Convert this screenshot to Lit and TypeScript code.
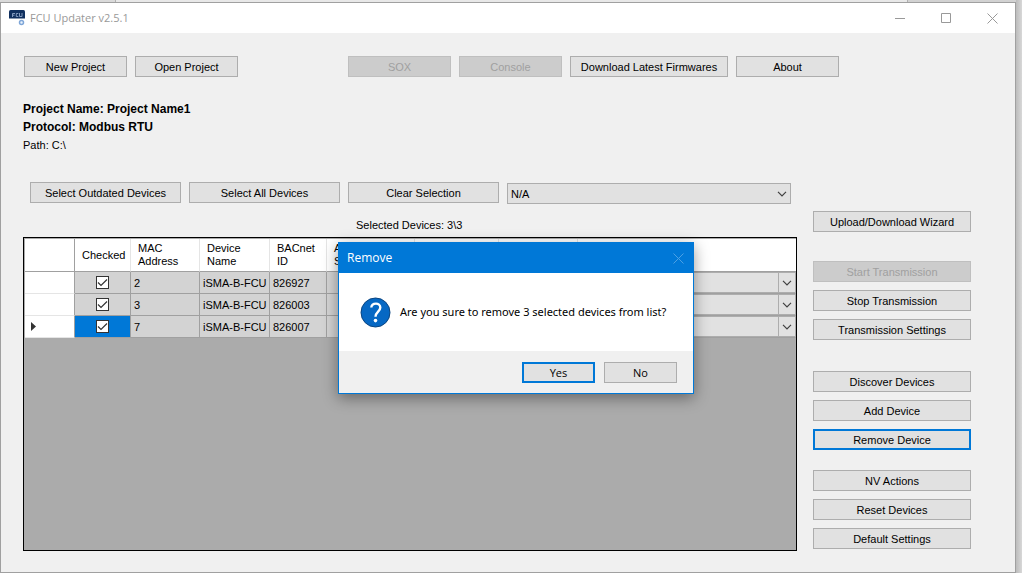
import { LitElement, html, css, svg } from "lit";
import { customElement } from "lit/decorators.js";

const chevron = html`<svg class="chev" width="10" height="6" viewBox="0 0 10 6" aria-hidden="true"><path d="M1 0.8 L5 4.8 L9 0.8" fill="none" stroke="#404040" stroke-width="1.2"/></svg>`;

@customElement("fcu-combo")
class FcuCombo extends LitElement {
  static properties = { value: {}, label: {}, cell: { type: Boolean, reflect: true } };
  declare value: string;
  declare label: string;
  declare cell: boolean;
  static styles = css`
    :host { display: grid; position: relative; }
    .box { appearance: none; box-sizing: border-box; width: 100%; height: 21px; margin: 0; padding: 0 24px 0 3px; border: 1px solid #adadad; border-radius: 0; background: #e1e1e1; color: #000; font: 11px/14px "Liberation Sans", Arial, sans-serif; }
    .drop { position: absolute; right: 0; top: 0; bottom: 0; width: 18px; display: grid; place-items: center; pointer-events: none; }
    :host([cell]) .drop { right: 2px; width: 15px; border-left: 1px solid #adadad; }
  `;
  render() {
    return html`<select class="box" aria-label=${this.label}><option>${this.value ?? ""}</option></select><span class="drop">${chevron}</span>`;
  }
}

@customElement("app-root")
class AppRoot extends LitElement {
  static styles = css`
    :host { display: block; box-sizing: border-box; min-height: 100vh; padding: 2px 6px 0 0; background: linear-gradient(90deg, #dadada 0 115px, #b0b0b0 115px 116px, #e8e8e8 116px calc(100% - 115px), #b0b0b0 calc(100% - 115px) calc(100% - 114px), #d2d2d2 calc(100% - 114px) calc(100% - 6px), #bcbcbc calc(100% - 6px), #d8d8d8 100%); font: 11px/14px "Liberation Sans", Arial, sans-serif; color: #000; }
    .window { position: relative; box-sizing: border-box; min-height: calc(100vh - 2px); display: flex; flex-direction: column; border: 1px solid #a0a0a0; background: #f0f0f0; }
    .title { display: flex; align-items: center; height: 30px; background: #fff; padding-left: 8px; color: #999; font: 11px/16px "Open Sans", sans-serif; }
    .title .name { flex: 1; margin-left: 5px; }
    .sys { width: 46px; height: 30px; border: 0; padding: 0; background: none; display: grid; place-items: center; }
    .body { flex: 1; display: flex; flex-direction: column; padding: 23px 44px 21px 22px; }
    .btn { box-sizing: border-box; height: 21px; padding: 0; border: 1px solid #adadad; border-radius: 0; background: #e1e1e1; color: #000; font: inherit; white-space: nowrap; }
    .btn:disabled { background: #ccc; border-color: #bfbfbf; color: #a0a0a0; }
    .btn.focus { border: 2px solid #0078d7; }
    .toolbar { display: flex; gap: 8px; padding-left: 1px; }
    .toolbar .btn { width: 103px; }
    .toolbar .btn.wide { width: 158px; }
    .gap { width: 94px; }
    .info { margin-top: 23px; line-height: 18px; }
    .info p { margin: 0; }
    .info .strong { font-size: 12px; font-weight: bold; }
    .main { flex: 1; display: flex; gap: 16px; margin-top: 28px; }
    .left { flex: 1; min-width: 0; display: flex; flex-direction: column; }
    .select-row { display: grid; grid-template-columns: 151px 151px 151px 1fr; gap: 8px; padding: 0 6px 0 7px; }
    .select-row fcu-combo { margin-top: 1px; }
    .count { margin: 14px 0 5px 333px; }
    .grid { flex: 1; box-sizing: border-box; border: 1px solid #000; background: #ababab; padding: 1px 0 0 1px; }
    table { width: 100%; border-collapse: separate; border-spacing: 0; table-layout: fixed; background: #fff; }
    th { box-sizing: border-box; height: 33px; padding: 0 7px; text-align: left; font-weight: normal; line-height: 13px; border-right: 1px solid #e5e5e5; border-bottom: 1px solid #a0a0a0; }
    th:first-child { border-right-color: #a0a0a0; }
    td { box-sizing: border-box; height: 22px; padding: 0 3px; background: #d3d3d3; border-right: 1px solid #a0a0a0; border-bottom: 1px solid #a0a0a0; white-space: nowrap; }
    td.head { background: #fff; border-bottom-color: #e5e5e5; padding-left: 6px; }
    td.check { text-align: center; padding: 0; }
    td.active { background: #0078d7; }
    td.combo { padding: 0; border-right: 0; }
    th:last-child { border-right: 0; }
    .tick { appearance: none; display: block; box-sizing: border-box; width: 13px; height: 13px; margin: 0 auto; border: 1px solid #333; background: #fff; }
    .tick:checked { background: #fff url("data:image/svg+xml,%3Csvg xmlns='http://www.w3.org/2000/svg' viewBox='0 0 11 11'%3E%3Cpath d='M1 5.5L4 8.5L10 2.5' fill='none' stroke='%23333' stroke-width='1.2'/%3E%3C/svg%3E"); }
    .side { width: 158px; margin-top: 29px; display: flex; flex-direction: column; gap: 8px; }
    .side .transfer { margin-top: 21px; }
    .side .devices { margin-top: 23px; }
    .side .reset { margin-top: 12px; }
    .group { display: flex; flex-direction: column; gap: 8px; }
    .dialog { position: absolute; left: 337px; top: 239px; box-sizing: border-box; width: 356px; margin: 0; padding: 0; border: 1px solid #0078d7; background: #fff; color: #000; box-shadow: 0 4px 14px rgba(0,0,0,.4); font: 11px/16px "Open Sans", sans-serif; }
    .caption { display: flex; align-items: center; height: 30px; padding-left: 8px; background: #0078d7; color: #fff; }
    .caption .name { flex: 1; margin: 0; font: inherit; font-size: 12px; }
    .close { width: 30px; height: 30px; border: 0; padding: 0; background: none; display: grid; place-items: center; }
    .message { display: flex; align-items: center; gap: 9px; height: 78px; padding-left: 21px; }
    .message p { margin: 0; font: 11px/16px "Noto Sans", sans-serif; }
    .actions { display: flex; justify-content: flex-end; gap: 9px; padding: 11px 16px 10px; background: #f0f0f0; }
    .actions .btn { width: 73px; }
  `;
  private side(names: string[], disabled = "", focus = "") {
    return names.map(n => html`<button class="btn ${n === focus ? "focus" : ""}" ?disabled=${n === disabled}>${n}</button>`);
  }
  render() {
    const rows = [["2", "826927"], ["3", "826003"], ["7", "826007"]];
    return html`<div class="window">
      <header class="title">
        <svg width="16" height="16" viewBox="0 0 16 16" aria-hidden="true"><path d="M1.500 0H14.500Q16 0 16 1.500V8.500H0V1.500Q0 0 1.500 0Z" fill="#10305f"/><path d="M3.500 7V3.500H6M3.500 5.200H5.500M9.300 3.500H7.300V6.500H9.300M10.500 3V6.500H13V3" fill="none" stroke="#8fa6c8" stroke-width=".9"/><circle cx="12.500" cy="12.500" r="2" fill="#eaf2fb" stroke="#7ea6d8" stroke-width="1.500"/></svg>
        <span class="name">FCU Updater v2.5.1</span>
        <button class="sys" aria-label="Minimize"><svg width="10" height="10"><path d="M0 5.500H10" stroke="#999"/></svg></button>
        <button class="sys" aria-label="Maximize"><svg width="10" height="10"><path d="M.5.5H9.500V9.500H.5Z" fill="none" stroke="#999"/></svg></button>
        <button class="sys" aria-label="Close"><svg width="11" height="11"><path d="M.5.5L10.500 10.500M10.500.5L.5 10.500" stroke="#999"/></svg></button>
      </header>
      <div class="body">
        <div class="toolbar">
          <button class="btn">New Project</button><button class="btn">Open Project</button><span class="gap"></span>
          <button class="btn" disabled>SOX</button><button class="btn" disabled>Console</button>
          <button class="btn wide">Download Latest Firmwares</button><button class="btn">About</button>
        </div>
        <div class="info"><p class="strong">Project Name: Project Name1</p><p class="strong">Protocol: Modbus RTU</p><p>Path: C:\\</p></div>
        <div class="main">
          <div class="left">
            <div class="select-row"><button class="btn">Select Outdated Devices</button><button class="btn">Select All Devices</button><button class="btn">Clear Selection</button><fcu-combo value="N/A" label="Firmware"></fcu-combo></div>
            <div class="count">Selected Devices: 3\\3</div>
            <div class="grid"><table>
              <colgroup><col style="width:50px"><col style="width:56px"><col style="width:69px"><col style="width:70px"><col style="width:57px"><col style="width:88px"><col style="width:84px"><col style="width:79px"><col></colgroup>
              <thead><tr><th></th><th>Checked</th><th>MAC<br>Address</th><th>Device<br>Name</th><th>BACnet<br>ID</th><th>A<br>S</th><th></th><th></th><th></th></tr></thead>
              <tbody>${rows.map(([mac, id], i) => html`<tr>
                <td class="head">${i === 2 ? html`<svg width="5" height="9" viewBox="0 0 5 9" aria-hidden="true"><path d="M0 0L5 4.500L0 9Z" fill="#333"/></svg>` : ""}</td>
                <td class="check ${i === 2 ? "active" : ""}"><input class="tick" type="checkbox" checked aria-label="Device ${mac}"></td>
                <td>${mac}</td><td>iSMA-B-FCU</td><td>${id}</td><td></td><td></td><td></td>
                <td class="combo"><fcu-combo cell label="Firmware for device ${mac}"></fcu-combo></td></tr>`)}</tbody>
            </table></div>
          </div>
          <nav class="side">
            ${this.side(["Upload/Download Wizard"])}
            <div class="group transfer">${this.side(["Start Transmission", "Stop Transmission", "Transmission Settings"], "Start Transmission")}</div>
            <div class="group devices">${this.side(["Discover Devices", "Add Device", "Remove Device"], "", "Remove Device")}</div>
            <div class="group reset">${this.side(["NV Actions", "Reset Devices", "Default Settings"])}</div>
          </nav>
        </div>
      </div>
      <section class="dialog" role="dialog" aria-labelledby="cap">
        <div class="caption"><h2 class="name" id="cap">Remove</h2><button class="close" aria-label="Close"><svg width="11" height="11"><path d="M.5.5L10.500 10.500M10.500.5L.5 10.500" stroke="#4da1e4"/></svg></button></div>
        <div class="message"><svg width="31" height="31" viewBox="0 0 31 31" aria-hidden="true"><circle cx="15.500" cy="15.500" r="14.500" fill="#0668c4" stroke="#0a4480"/><path d="M11.300 10.500C11.800 5.300 20.300 5.300 20.300 10.500C20.300 14.500 15.500 14.800 15.500 19.800" fill="none" stroke="#fff" stroke-width="2.400"/><circle cx="15.500" cy="23.600" r="1.800" fill="#fff"/></svg><p>Are you sure to remove 3 selected devices from list?</p></div>
        <div class="actions"><button class="btn focus">Yes</button><button class="btn">No</button></div>
      </section>
    </div>`;
  }
}
